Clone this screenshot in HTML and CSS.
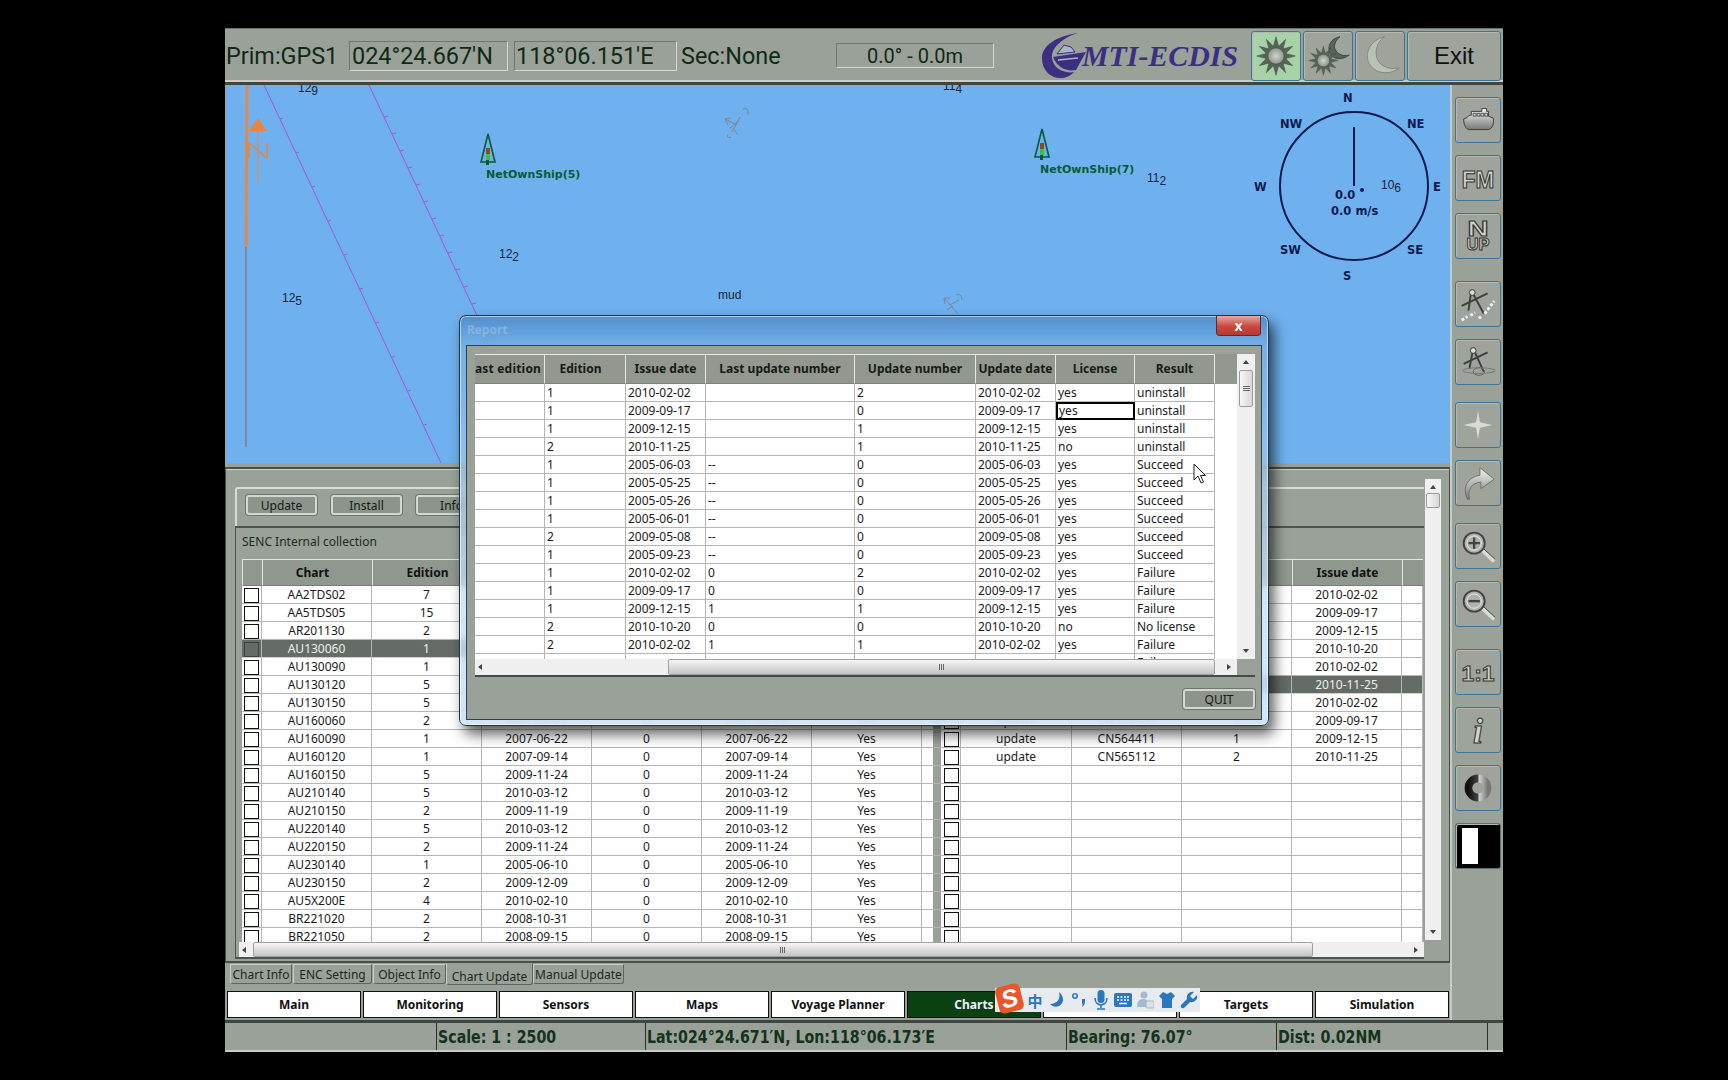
FILE: index.html
```html
<!DOCTYPE html>
<html lang="en">
<head>
<meta charset="utf-8">
<title>MTI-ECDIS</title>
<link rel="stylesheet" href="styles.css">
</head>
<body>
<svg class="defs" width="0" height="0" aria-hidden="true">
  <defs>
    <linearGradient id="silver" x1="0" y1="0" x2="0" y2="1"><stop offset="0" stop-color="#f4f6f2"/><stop offset="1" stop-color="#75797a"/></linearGradient>
    <linearGradient id="ring" x1="0" y1="0" x2="1" y2="0"><stop offset="0" stop-color="#111"/><stop offset=".5" stop-color="#444"/><stop offset=".55" stop-color="#d5d5d5"/><stop offset="1" stop-color="#777"/></linearGradient>
    <radialGradient id="sunc"><stop offset="0" stop-color="#cfd6cd"/><stop offset="1" stop-color="#8b948a"/></radialGradient>
    <symbol id="sun" viewBox="0 0 50 50">
      <polygon points="25,4 27.85,14.37 35.5,6.81 32.78,17.22 43.19,14.5 35.63,22.15 46,25 35.63,27.85 43.19,35.5 32.78,32.78 35.5,43.19 27.85,35.63 25,46 22.15,35.63 14.5,43.19 17.22,32.78 6.81,35.5 14.37,27.85 4,25 14.37,22.15 6.81,14.5 17.22,17.22 14.5,6.81 22.15,14.37" fill="#566455" stroke="#3f4a3f" stroke-width=".5"/>
      <circle cx="25" cy="25" r="9" fill="url(#sunc)" stroke="#4a554a"/>
    </symbol>
    <symbol id="tree" viewBox="0 0 18 34">
      <path d="M9 1 L16 29 L2 29 Z" fill="none" stroke="#0a5a35" stroke-width="1.6"/>
      <rect x="7" y="26" width="3" height="6" fill="#0a5a35"/>
      <rect x="7" y="15" width="4" height="8" fill="#8a4a20"/>
      <rect x="7" y="21" width="4" height="6" fill="#3fbf3f"/>
    </symbol>
  </defs>
</svg>

<div class="app">
  <header class="top">
    <span class="prim">Prim:GPS1</span>
    <span class="field lat">024°24.667′N</span>
    <span class="field lon">118°06.151′E</span>
    <span class="sec">Sec:None</span>
    <span class="field off">0.0° - 0.0m</span>
    <svg class="logo" width="200" height="48" viewBox="0 0 200 48">
      <path d="M36 1 C14 4 0 14 0 26 C0 38 8 46 18 46 C24 46 28 44 32 40 C22 42 11 36 10 26 C9 16 20 6 36 1 Z" fill="#3a2f80"/>
      <path d="M11 25 L44 20 L34 38 C24 40 15 35 11 25 Z" fill="#3a2f80"/>
      <path d="M15 22 L22 13 L29 15 L33 20 Z" fill="#aeb2c8" stroke="#3a2f80"/>
      <path d="M16 28 L36 26" stroke="#aeb2c8" stroke-width="1.5"/>
      <text class="logotext" x="40" y="34" textLength="156" lengthAdjust="spacingAndGlyphs">MTI-ECDIS</text>
    </svg>
    <button class="btn mode on" aria-label="Day"><svg width="46" height="46" viewBox="0 0 50 50"><use href="#sun"/></svg></button>
    <button class="btn mode" aria-label="Dusk">
      <svg width="46" height="46" viewBox="0 0 50 50">
        <path d="M38 4 C28 6 24 14 27 22 C31 29 40 30 48 24 C40 26 33 22 32 15 C32 11 34 7 38 4 Z" fill="#5a635a" stroke="#3c443c"/>
        <use href="#sun" x="1" y="11" width="38" height="38"/>
      </svg>
    </button>
    <button class="btn mode" aria-label="Night">
      <svg width="46" height="46" viewBox="0 0 50 50"><path d="M30 4 C14 8 8 22 13 33 C19 45 36 46 46 38 C32 41 22 34 21 24 C20 15 24 8 30 4 Z" fill="#b9c2b4" stroke="#7d857b"/></svg>
    </button>
    <button class="btn exit">Exit</button>
  </header>

  <div class="middle">
    <div class="leftcol">
      <section class="map">
        <svg class="chart" width="1225" height="378" viewBox="225 85 1225 378">
          <line x1="264" y1="85" x2="441" y2="463" class="route"/>
          <line x1="369" y1="85" x2="546" y2="463" class="route"/>
          <path class="ticks" d="M280 119l3 -1M296 153l3 -1M312 187l3 -1M328 221l3 -1M344 255l3 -1M360 289l3 -1M376 323l3 -1M392 357l3 -1M408 391l3 -1M424 425l3 -1M384 117l4 -1M392 134l4 -1M400 151l4 -1M408 168l4 -1M416 185l4 -1M424 202l4 -1M432 219l4 -1M440 236l4 -1M448 253l4 -1M456 270l4 -1M464 287l4 -1M472 304l4 -1"/>
          <line x1="247" y1="85" x2="246" y2="247" class="orange"/>
          <line x1="246" y1="247" x2="246" y2="447" class="greyline"/>
          <path d="M258 118 L267 131 L249 131 Z" fill="#e8843f"/>
          <line x1="258" y1="131" x2="258" y2="183" stroke="#e8843f"/>
          <path d="M249 158 V143 L267 158 V143" fill="none" stroke="#e8843f" stroke-width="1.5"/>
          <text class="snd" x="298" y="92">12<tspan dy="3">9</tspan></text>
          <text class="snd" x="943" y="90">11<tspan dy="3">4</tspan></text>
          <text class="snd" x="499" y="258">12<tspan dy="3">2</tspan></text>
          <text class="snd" x="282" y="302">12<tspan dy="3">5</tspan></text>
          <text class="snd" x="1147" y="182">11<tspan dy="3">2</tspan></text>
          <text class="snd" x="1381" y="189">10<tspan dy="3">6</tspan></text>
          <text class="snd" x="718" y="299">mud</text>
          <path class="rock" d="M725 119 l12 6 M725 119 l3 6 M725 119 l6 -1 M730 128 l9 -7 M733 128 l5 7 M728 134 q-3 5 3 3 M743 109 q6 -2 5 6 M740 117 l-8 15"/>
          <path class="rock" d="M944 298 l14 16 M944 298 l1 6 M944 298 l6 0 M950 305 l9 -5 M947 310 l6 -4 M956 295 q6 -2 6 5 M941 316 l6 4"/>
          <use href="#tree" x="479" y="133" width="18" height="34"/>
          <text class="own" x="486" y="178">NetOwnShip(5)</text>
          <use href="#tree" x="1033" y="128" width="18" height="34"/>
          <text class="own" x="1040" y="173">NetOwnShip(7)</text>
          <circle cx="1354" cy="186" r="74" class="dial"/>
          <line x1="1354" y1="127" x2="1354" y2="186" class="needle"/>
          <circle cx="1362" cy="190" r="2" fill="#0a1a50"/>
          <text class="cmp" x="1335" y="199">0.0</text>
          <text class="cmp" x="1331" y="215">0.0 m/s</text>
          <text class="cmp" x="1343" y="102">N</text>
          <text class="cmp" x="1407" y="128">NE</text>
          <text class="cmp" x="1433" y="191">E</text>
          <text class="cmp" x="1407" y="254">SE</text>
          <text class="cmp" x="1343" y="280">S</text>
          <text class="cmp" x="1280" y="254">SW</text>
          <text class="cmp" x="1254" y="191">W</text>
          <text class="cmp" x="1280" y="128">NW</text>
        </svg>
      </section>

      <section class="panel">
        <div class="mainpane">
          <div class="group">
            <button class="gbtn">Update</button>
            <button class="gbtn">Install</button>
            <button class="gbtn">Info</button>
          </div>
          <div class="frame">
            <div class="senc">SENC Internal collection</div>
            <div class="tables">
              <div class="clip left">
                <table class="grid">
                  <colgroup><col class="c20"><col class="c110"><col class="c110"><col class="c110"><col class="c110"><col class="c110"><col class="c110"></colgroup>
                  <thead><tr><th></th><th class="shift">Chart</th><th>Edition</th><th></th><th></th><th></th><th></th></tr></thead>
                  <tbody>
                    <tr><td><i class="box"></i></td><td>AA2TDS02</td><td>7</td><td></td><td></td><td></td><td></td></tr>
                    <tr><td><i class="box"></i></td><td>AA5TDS05</td><td>15</td><td></td><td></td><td></td><td></td></tr>
                    <tr><td><i class="box"></i></td><td>AR201130</td><td>2</td><td></td><td></td><td></td><td></td></tr>
                    <tr class="sel"><td><i class="box"></i></td><td>AU130060</td><td>1</td><td></td><td></td><td></td><td></td></tr>
                    <tr><td><i class="box"></i></td><td>AU130090</td><td>1</td><td></td><td></td><td></td><td></td></tr>
                    <tr><td><i class="box"></i></td><td>AU130120</td><td>5</td><td></td><td></td><td></td><td></td></tr>
                    <tr><td><i class="box"></i></td><td>AU130150</td><td>5</td><td></td><td></td><td></td><td></td></tr>
                    <tr><td><i class="box"></i></td><td>AU160060</td><td>2</td><td>2007-06-22</td><td>0</td><td>2007-06-22</td><td>Yes</td></tr>
                    <tr><td><i class="box"></i></td><td>AU160090</td><td>1</td><td>2007-06-22</td><td>0</td><td>2007-06-22</td><td>Yes</td></tr>
                    <tr><td><i class="box"></i></td><td>AU160120</td><td>1</td><td>2007-09-14</td><td>0</td><td>2007-09-14</td><td>Yes</td></tr>
                    <tr><td><i class="box"></i></td><td>AU160150</td><td>5</td><td>2009-11-24</td><td>0</td><td>2009-11-24</td><td>Yes</td></tr>
                    <tr><td><i class="box"></i></td><td>AU210140</td><td>5</td><td>2010-03-12</td><td>0</td><td>2010-03-12</td><td>Yes</td></tr>
                    <tr><td><i class="box"></i></td><td>AU210150</td><td>2</td><td>2009-11-19</td><td>0</td><td>2009-11-19</td><td>Yes</td></tr>
                    <tr><td><i class="box"></i></td><td>AU220140</td><td>5</td><td>2010-03-12</td><td>0</td><td>2010-03-12</td><td>Yes</td></tr>
                    <tr><td><i class="box"></i></td><td>AU220150</td><td>2</td><td>2009-11-24</td><td>0</td><td>2009-11-24</td><td>Yes</td></tr>
                    <tr><td><i class="box"></i></td><td>AU230140</td><td>1</td><td>2005-06-10</td><td>0</td><td>2005-06-10</td><td>Yes</td></tr>
                    <tr><td><i class="box"></i></td><td>AU230150</td><td>2</td><td>2009-12-09</td><td>0</td><td>2009-12-09</td><td>Yes</td></tr>
                    <tr><td><i class="box"></i></td><td>AU5X200E</td><td>4</td><td>2010-02-10</td><td>0</td><td>2010-02-10</td><td>Yes</td></tr>
                    <tr><td><i class="box"></i></td><td>BR221020</td><td>2</td><td>2008-10-31</td><td>0</td><td>2008-10-31</td><td>Yes</td></tr>
                    <tr><td><i class="box"></i></td><td>BR221050</td><td>2</td><td>2008-09-15</td><td>0</td><td>2008-09-15</td><td>Yes</td></tr>
                  </tbody>
                </table>
              </div>
              <div class="clip right">
                <table class="grid wide">
                  <colgroup><col class="c28"><col class="c111"><col class="c110"><col class="c110"><col class="c110"><col class="c21"></colgroup>
                  <thead><tr><th></th><th></th><th></th><th></th><th>Issue date</th><th></th></tr></thead>
                  <tbody>
                    <tr><td class="rh"><i class="box"></i></td><td></td><td></td><td></td><td>2010-02-02</td><td></td></tr>
                    <tr><td class="rh"><i class="box"></i></td><td></td><td></td><td></td><td>2009-09-17</td><td></td></tr>
                    <tr><td class="rh"><i class="box"></i></td><td></td><td></td><td></td><td>2009-12-15</td><td></td></tr>
                    <tr><td class="rh"><i class="box"></i></td><td></td><td></td><td></td><td>2010-10-20</td><td></td></tr>
                    <tr><td class="rh"><i class="box"></i></td><td></td><td></td><td></td><td>2010-02-02</td><td></td></tr>
                    <tr class="sel"><td class="rh"><i class="box"></i></td><td></td><td></td><td></td><td>2010-11-25</td><td></td></tr>
                    <tr><td class="rh"><i class="box"></i></td><td></td><td></td><td></td><td>2010-02-02</td><td></td></tr>
                    <tr><td class="rh"><i class="box"></i></td><td>update</td><td>CN564300</td><td>3</td><td>2009-09-17</td><td></td></tr>
                    <tr><td class="rh"><i class="box"></i></td><td>update</td><td>CN564411</td><td>1</td><td>2009-12-15</td><td></td></tr>
                    <tr><td class="rh"><i class="box"></i></td><td>update</td><td>CN565112</td><td>2</td><td>2010-11-25</td><td></td></tr>
                    <tr><td class="rh"><i class="box"></i></td><td></td><td></td><td></td><td></td><td></td></tr>
                    <tr><td class="rh"><i class="box"></i></td><td></td><td></td><td></td><td></td><td></td></tr>
                    <tr><td class="rh"><i class="box"></i></td><td></td><td></td><td></td><td></td><td></td></tr>
                    <tr><td class="rh"><i class="box"></i></td><td></td><td></td><td></td><td></td><td></td></tr>
                    <tr><td class="rh"><i class="box"></i></td><td></td><td></td><td></td><td></td><td></td></tr>
                    <tr><td class="rh"><i class="box"></i></td><td></td><td></td><td></td><td></td><td></td></tr>
                    <tr><td class="rh"><i class="box"></i></td><td></td><td></td><td></td><td></td><td></td></tr>
                    <tr><td class="rh"><i class="box"></i></td><td></td><td></td><td></td><td></td><td></td></tr>
                    <tr><td class="rh"><i class="box"></i></td><td></td><td></td><td></td><td></td><td></td></tr>
                    <tr><td class="rh"><i class="box"></i></td><td></td><td></td><td></td><td></td><td></td></tr>
                  </tbody>
                </table>
              </div>
            </div>
            <div class="hscroll main-h">
              <i class="arr al"></i>
              <div class="track"><div class="hthumb big"><i class="grip"></i></div></div>
              <i class="arr ar"></i>
            </div>
          </div>
        </div>
        <div class="vscroll main-v">
          <i class="arr au"></i>
          <div class="track"><div class="vthumb small"></div></div>
          <i class="arr ad"></i>
        </div>
      </section>

      <nav class="tabs">
        <span class="tab">Chart Info</span>
        <span class="tab">ENC Setting</span>
        <span class="tab">Object Info</span>
        <span class="tab active">Chart Update</span>
        <span class="tab">Manual Update</span>
      </nav>

      <nav class="menu">
        <a class="mi">Main</a>
        <a class="mi">Monitoring</a>
        <a class="mi">Sensors</a>
        <a class="mi">Maps</a>
        <a class="mi">Voyage Planner</a>
        <a class="mi cur">Charts</a>
        <a class="mi"></a>
        <a class="mi">Targets</a>
        <a class="mi">Simulation</a>
      </nav>
    </div>

    <aside class="tools">
      <button class="btn tool" aria-label="Own ship">
        <svg width="44" height="44" viewBox="0 0 46 46">
          <path d="M8 22 C12 21 13 18 15 18 L16 18 L16 14 L27 14 L27 11 L32 11 L32 14 L34 14 L34 19 L39 21 C40 27 38 32 34 33 L14 33 C10 33 8 27 8 22 Z" fill="url(#silver)" stroke="#3a3d3a"/>
          <path d="M18 16h3v3h-3zM22 16h3v3h-3zM26 16h3v3h-3zM30 16h3v3h-3z" fill="none" stroke="#333" stroke-width=".8"/>
        </svg>
      </button>
      <button class="btn tool"><svg width="44" height="44" viewBox="0 0 46 46"><text class="embos" x="23" y="33" text-anchor="middle" font-size="25" textLength="34" lengthAdjust="spacingAndGlyphs">FM</text></svg></button>
      <button class="btn tool"><svg width="44" height="44" viewBox="0 0 46 46"><text class="embos" x="23" y="23" text-anchor="middle" font-size="24" textLength="22" lengthAdjust="spacingAndGlyphs">N</text><text class="embos" x="23" y="38" text-anchor="middle" font-size="18" textLength="24" lengthAdjust="spacingAndGlyphs">UP</text></svg></button>
      <button class="btn tool gap-a" aria-label="Route measure">
        <svg width="44" height="44" viewBox="0 0 46 46">
          <path d="M16 9 L29 33 M16 9 L13 30 M6 25 L33 12" stroke="#3a3f3a" stroke-width="2" fill="none"/>
          <circle cx="17" cy="11" r="3" fill="#ddd" stroke="#333"/>
          <path d="M6 40 L12 36 M15 35 L20 32 M24 36 L27 39 M30 33 L40 20" stroke="#eef" stroke-width="3" stroke-dasharray="3 2" fill="none"/>
        </svg>
      </button>
      <button class="btn tool" aria-label="Range measure">
        <svg width="44" height="44" viewBox="0 0 46 46">
          <path d="M18 9 L29 33 M18 9 L14 30 M8 25 L33 13" stroke="#3a3f3a" stroke-width="2" fill="none"/>
          <circle cx="18" cy="11" r="3" fill="#ddd" stroke="#333"/>
          <ellipse cx="24" cy="32" rx="17" ry="3" fill="none" stroke="#777"/>
          <ellipse cx="24" cy="33" rx="6" ry="4" fill="none" stroke="#666"/>
        </svg>
      </button>
      <button class="btn tool gap-b" aria-label="Centre">
        <svg width="44" height="44" viewBox="0 0 46 46"><path d="M23 8 L25 20 L38 23 L25 26 L23 38 L21 26 L8 23 L21 20 Z" fill="#d8dcd6"/></svg>
      </button>
      <button class="btn tool" aria-label="Back">
        <svg width="44" height="44" viewBox="0 0 46 46"><path d="M12 40 C6 28 12 17 25 15 L25 7 L40 19 L26 29 L26 22 C16 23 12 30 14 40 Z" fill="url(#silver)" stroke="#6a6f6a"/></svg>
      </button>
      <button class="btn tool gap-b" aria-label="Zoom in">
        <svg width="44" height="44" viewBox="0 0 46 46"><path d="M27 27 L40 39" stroke="#d8dad6" stroke-width="4"/><path d="M27 27 L40 39" stroke="#444" stroke-width="1" transform="translate(1 -2)"/><circle cx="19" cy="20" r="11" fill="#adb3ab" stroke="#444" stroke-width="2"/><circle cx="19" cy="20" r="7.5" fill="none" stroke="#e8ebe6"/><path d="M13 20h12M19 14v12" stroke="#444" stroke-width="2.5"/></svg>
      </button>
      <button class="btn tool" aria-label="Zoom out">
        <svg width="44" height="44" viewBox="0 0 46 46"><path d="M27 27 L40 39" stroke="#d8dad6" stroke-width="4"/><path d="M27 27 L40 39" stroke="#444" stroke-width="1" transform="translate(1 -2)"/><circle cx="19" cy="20" r="11" fill="#adb3ab" stroke="#444" stroke-width="2"/><circle cx="19" cy="20" r="7.5" fill="none" stroke="#e8ebe6"/><path d="M13 20h12" stroke="#444" stroke-width="2.5"/></svg>
      </button>
      <button class="btn tool gap-a"><svg width="44" height="44" viewBox="0 0 46 46"><text class="embos" x="23" y="32" text-anchor="middle" font-size="24">1:1</text></svg></button>
      <button class="btn tool"><svg width="44" height="44" viewBox="0 0 46 46"><text class="embos ital" x="23" y="37" text-anchor="middle" font-size="37">i</text></svg></button>
      <button class="btn tool" aria-label="Brightness">
        <svg width="44" height="44" viewBox="0 0 46 46"><circle cx="23" cy="23" r="10" fill="none" stroke="url(#ring)" stroke-width="8"/></svg>
      </button>
      <button class="btn tool contrast" aria-label="Contrast"><i class="half"></i></button>
    </aside>
  </div>

  <footer class="status">
    <span></span>
    <span><b class="st">Scale: 1 : 2500</b></span>
    <span><b class="st">Lat:024°24.671′N, Lon:118°06.173′E</b></span>
    <span><b class="st">Bearing: 76.07°</b></span>
    <span><b class="st">Dist: 0.02NM</b></span>
    <span></span>
  </footer>
</div>

<div class="dialog">
  <div class="dtitle">Report</div>
  <button class="close">x</button>
  <div class="dbody">
    <div class="dframe">
      <div class="dtop">
        <div class="dwrap">
          <table class="rep">
            <colgroup><col class="d70"><col class="d81"><col class="d80"><col class="d149"><col class="d121"><col class="d80"><col class="d79"><col class="d80"></colgroup>
            <thead><tr><th class="cut">Last edition</th><th class="ed">Edition</th><th>Issue date</th><th>Last update number</th><th>Update number</th><th>Update date</th><th>License</th><th>Result</th></tr></thead>
            <tbody>
              <tr><td></td><td>1</td><td>2010-02-02</td><td></td><td>2</td><td>2010-02-02</td><td>yes</td><td>uninstall</td></tr>
              <tr><td></td><td>1</td><td>2009-09-17</td><td></td><td>0</td><td>2009-09-17</td><td class="focus">yes</td><td>uninstall</td></tr>
              <tr><td></td><td>1</td><td>2009-12-15</td><td></td><td>1</td><td>2009-12-15</td><td>yes</td><td>uninstall</td></tr>
              <tr><td></td><td>2</td><td>2010-11-25</td><td></td><td>1</td><td>2010-11-25</td><td>no</td><td>uninstall</td></tr>
              <tr><td></td><td>1</td><td>2005-06-03</td><td>--</td><td>0</td><td>2005-06-03</td><td>yes</td><td>Succeed</td></tr>
              <tr><td></td><td>1</td><td>2005-05-25</td><td>--</td><td>0</td><td>2005-05-25</td><td>yes</td><td>Succeed</td></tr>
              <tr><td></td><td>1</td><td>2005-05-26</td><td>--</td><td>0</td><td>2005-05-26</td><td>yes</td><td>Succeed</td></tr>
              <tr><td></td><td>1</td><td>2005-06-01</td><td>--</td><td>0</td><td>2005-06-01</td><td>yes</td><td>Succeed</td></tr>
              <tr><td></td><td>2</td><td>2009-05-08</td><td>--</td><td>0</td><td>2009-05-08</td><td>yes</td><td>Succeed</td></tr>
              <tr><td></td><td>1</td><td>2005-09-23</td><td>--</td><td>0</td><td>2005-09-23</td><td>yes</td><td>Succeed</td></tr>
              <tr><td></td><td>1</td><td>2010-02-02</td><td>0</td><td>2</td><td>2010-02-02</td><td>yes</td><td>Failure</td></tr>
              <tr><td></td><td>1</td><td>2009-09-17</td><td>0</td><td>0</td><td>2009-09-17</td><td>yes</td><td>Failure</td></tr>
              <tr><td></td><td>1</td><td>2009-12-15</td><td>1</td><td>1</td><td>2009-12-15</td><td>yes</td><td>Failure</td></tr>
              <tr><td></td><td>2</td><td>2010-10-20</td><td>0</td><td>0</td><td>2010-10-20</td><td>no</td><td>No license</td></tr>
              <tr><td></td><td>2</td><td>2010-02-02</td><td>1</td><td>1</td><td>2010-02-02</td><td>yes</td><td>Failure</td></tr>
              <tr><td></td><td></td><td></td><td></td><td></td><td></td><td></td><td>Failure</td></tr>
            </tbody>
          </table>
        </div>
        <div class="vscroll rep-v">
          <i class="arr au"></i>
          <div class="track"><div class="vthumb tall"><i class="grip"></i></div></div>
          <i class="arr ad"></i>
        </div>
      </div>
      <div class="hscroll rep-h">
        <i class="arr al"></i>
        <div class="track"><div class="hthumb rep-thumb"><i class="grip"></i></div></div>
        <i class="arr ar"></i>
      </div>
    </div>
    <div class="dfoot"><button class="gbtn quit">QUIT</button></div>
  </div>
</div>

<svg class="cursor" width="14" height="22" viewBox="0 0 14 22"><path d="M1 1 L1 17 L5 13 L8 20 L10.5 19 L7.5 12.5 L12.5 12.5 Z" fill="#fff" stroke="#222" stroke-width="1"/></svg>

<div class="sogou">
  <span class="slogo">S</span>
  <span class="sg zh">中</span>
  <svg class="sg" width="18" height="18" viewBox="0 0 18 18"><path d="M11 1 C13 8 9 13 2 13 C5 17 14 17 15 9 C15 6 14 3 11 1 Z"/></svg>
  <svg class="sg" width="18" height="18" viewBox="0 0 18 18"><circle cx="5" cy="5" r="2.2" fill="none" stroke="#2a77c0" stroke-width="1.6"/><path d="M12 8 h3 v3 q0 3 -3 5 q1 -3 0 -4 z"/></svg>
  <svg class="sg" width="18" height="20" viewBox="0 0 18 20"><rect x="5.5" y="0" width="7" height="13" rx="3.5"/><path d="M3 8 c0 9 12 9 12 0 M9 14 v4 M5 19 h8" fill="none" stroke="#2a77c0" stroke-width="1.6"/></svg>
  <svg class="sg" width="18" height="16" viewBox="0 0 18 16"><rect x="0" y="1" width="18" height="14" rx="2"/><path d="M3 5h2M6.5 5h2M10 5h2M13 5h2M3 8h2M6.5 8h2M10 8h2M13 8h2M5 11.5h8" stroke="#fff" stroke-width="1.4"/></svg>
  <svg class="sg dim" width="18" height="18" viewBox="0 0 18 18"><circle cx="8" cy="4" r="3.5"/><path d="M1 16 C1 9 4 8 8 8 C10 8 11 9 11 10 L11 16 Z"/><rect x="10" y="10" width="8" height="7" rx="1" fill="#dfe3e6" stroke="#9fb3c5"/></svg>
  <svg class="sg" width="18" height="18" viewBox="0 0 18 18"><path d="M5 1 L9 3 L13 1 L17 5 L14 8 L14 17 L4 17 L4 8 L1 5 Z"/></svg>
  <svg class="sg" width="18" height="18" viewBox="0 0 18 18"><path d="M17 4 L13 8 L10 5 L14 1 C10 0 6 3 7 8 L1 14 C0 16 2 18 4 17 L10 11 C15 12 18 8 17 4 Z"/></svg>
</div>
</body>
</html>
```
FILE: styles.css
```css
* { box-sizing: border-box; }
html, body { margin: 0; padding: 0; background: #000; height: 100%; overflow: hidden; }
body { font-family: "Noto Sans", sans-serif; font-size: 12px; color: #111; }
button { font: inherit; padding: 0; cursor: default; }
.defs { position: absolute; }

.app { width: 1278px; height: 1023px; margin: 29px 0 0 225px; background: #9aa199; display: flex; flex-direction: column; box-shadow: 0 -1px #6d726c; }

/* top bar */
.top { height: 56px; display: flex; align-items: center; flex: none; padding-left: 1px; border-bottom: 3px solid #3f4540; box-shadow: inset 0 -2px #c9cec6; color: #0f2a14; font-family: Roboto, sans-serif; font-size: 23.4px; }
.prim { width: 123px; }
.field { display: flex; align-items: center; border: 1px solid; border-color: #71776f #d3d7d0 #d3d7d0 #71776f; white-space: nowrap; }
.lat { width: 159px; height: 30px; padding-left: 2px; }
.lon { width: 163px; height: 30px; padding-left: 1px; margin-left: 6px; }
.sec { width: 155px; margin-left: 4px; }
.off { width: 158px; height: 25px; justify-content: center; font-size: 20px; }
.logo { margin-left: 48px; flex: none; }
.logotext { font-family: "Liberation Serif", serif; font-weight: bold; font-style: italic; font-size: 30px; fill: #3a2f80; }
.btn { background: #9ea49c; border: 1px solid #3f7394; border-radius: 3px; display: flex; align-items: center; justify-content: center; color: #111; box-shadow: inset 1px 1px #b4b9b1; }
.mode { width: 50px; height: 50px; margin-left: 2px; }
.mode:first-of-type { margin-left: 9px; }
.mode.on { background: #a8d2a7; }
.exit { width: 94px; height: 50px; margin-left: 2px; font-family: "Liberation Sans", sans-serif; font-size: 24px; }

/* middle */
.middle { flex: none; height: 935px; display: flex; }
.leftcol { width: 1225px; flex: none; display: flex; flex-direction: column; }
.map { height: 378px; flex: none; background: #6fb1ee; margin-left: 1px; overflow: hidden; }
.chart { display: block; margin-left: -1px; }
.route { stroke: #a455d8; stroke-width: 1; }
.ticks { stroke: #a455d8; stroke-width: 1; fill: none; }
.orange { stroke: #e0894f; stroke-width: 3; }
.greyline { stroke: #7c8a98; stroke-width: 2; }
.snd { font-family: "Liberation Sans", sans-serif; font-size: 12px; fill: #10233c; }
.rock { stroke: #76889a; stroke-width: 1; fill: none; }
.own { font-family: "DejaVu Sans", sans-serif; font-size: 11px; font-weight: bold; fill: #0a5a35; }
.dial { fill: none; stroke: #0a1a50; stroke-width: 2; }
.needle { stroke: #0a1a50; stroke-width: 2; }
.cmp { font-family: "DejaVu Sans", sans-serif; font-size: 11.5px; font-weight: bold; fill: #0a1a50; }

/* panel */
.panel { height: 496px; flex: none; margin-top: 4px; border: 1px solid #4a4f4a; border-top: 2px solid #4a4f4a; border-bottom: 2px solid #4a4f4a; box-shadow: inset 0 1px #cdd2cc; padding: 10px 8px 0 9px; display: flex; gap: 1px; }
.mainpane { width: 1189px; flex: none; padding-top: 8px; }
.group { height: 39px; border: 2px solid #d8dcd6; border-right: 0; border-bottom: 0; border-radius: 3px 0 0 0; padding: 6px 0 0 9px; display: flex; gap: 14px; }
.gbtn { width: 71px; height: 20px; background: #8d948c; border: 2px solid #d5d8d2; border-radius: 3px; color: #151a15; box-shadow: 0 0 0 1px #70766f; font-size: 12px; }
.frame { height: 433px; border-top: 2px solid #4d534d; border-left: 1px solid #4d534d; border-bottom: 2px solid #4d534d; padding: 0 0 0 6px; }
.senc { height: 31px; line-height: 28px; color: #1f2a20; }
.tables { height: 383px; display: flex; }
.clip { overflow: hidden; flex: none; height: 383px; background: #fff; }
.left { width: 691px; background: repeating-linear-gradient(#fff 0 17px, #b5b5b5 17px 18px) 0 9px; }
.right { width: 490px; }
.grid { border-collapse: separate; border-spacing: 0; table-layout: fixed; width: 680px; text-align: center; }
.grid.wide { width: 490px; }
.c20 { width: 20px; } .c21 { width: 21px; } .c28 { width: 28px; } .c110 { width: 110px; } .c111 { width: 111px; }
.grid th { height: 27px; padding: 0; background: #90978f; border-top: 1px solid #e4e7e2; border-left: 1px solid #e4e7e2; border-bottom: 1px solid #767c76; font-weight: bold; color: #111; }
.grid th.shift { padding-right: 10px; }
.grid td { height: 18px; padding: 1px 0 0; border-right: 1px solid #b5b5b5; border-bottom: 1px solid #b5b5b5; line-height: 16px; white-space: nowrap; overflow: hidden; color: #1a1a1a; background: #fff; }
.box { display: block; width: 15px; height: 15px; border: 1px solid #111; margin-left: 2px; background: #fff; }
.rh { background: linear-gradient(90deg, #9aa199 8px, #fff 8px) !important; }
.rh .box { margin-left: 11px; }
.sel td { background: #656c66; color: #eef0ee; border-bottom-color: #d0d0d0; }
.sel .box { background: #656c66; border-color: #3c423c; }
.sel .rh { background: linear-gradient(90deg, #9aa199 8px, #656c66 8px) !important; }

/* scrollbars */
.arr { display: block; width: 0; height: 0; flex: none; border: 3px solid transparent; }
.au { border-bottom: 4px solid #444; border-top: 0; margin: 6px auto 4px; }
.ad { border-top: 4px solid #444; border-bottom: 0; margin: 4px auto 6px; }
.al { border-right: 4px solid #444; border-left: 0; margin: auto 6px auto 3px; }
.ar { border-left: 4px solid #444; border-right: 0; margin: auto 6px; }
.vscroll { display: flex; flex-direction: column; background: #f0f0f0; }
.hscroll { display: flex; background: #f0f0f0; }
.vscroll .track { flex: 1; }
.hscroll .track { flex: 1; display: flex; }
.main-v { width: 16px; height: 461px; }
.vthumb { border: 1px solid #9a9a9a; border-radius: 2px; background: linear-gradient(90deg, #f7f7f7, #d8d8d8); margin: 0 1px; display: flex; align-items: center; justify-content: center; }
.small { height: 15px; }
.tall { height: 37px; margin: 2px 2px 0; }
.main-h { height: 15px; margin-left: -3px; width: 1185px; }
.big { width: 1060px; margin-left: 1px; }
.hthumb { height: 100%; border: 1px solid #a0a0a0; border-radius: 2px; background: linear-gradient(#f6f6f6, #c4c4c4); display: flex; align-items: center; justify-content: center; }
.hthumb .grip { width: 6px; height: 6px; background: repeating-linear-gradient(90deg, #666 0 1px, transparent 1px 2px); }
.vthumb .grip { width: 7px; height: 6px; background: repeating-linear-gradient(#666 0 1px, transparent 1px 2px); }

/* tabs */
.tabs { height: 22px; flex: none; display: flex; align-items: flex-start; padding-left: 4px; }
.tab { height: 20px; margin-top: 1px; margin-left: 1px; display: flex; align-items: center; justify-content: center; white-space: nowrap; border: 1px solid #5d635d; border-top-color: #c9cec6; border-left-color: #c9cec6; border-radius: 0 0 3px 3px; color: #1d261e; }
.tab:nth-child(1) { width: 62px; }
.tab:nth-child(2) { width: 79px; }
.tab:nth-child(3) { width: 73px; }
.tab:nth-child(4) { width: 87px; margin-left: 0; height: 22px; margin-top: 0; border-top-color: transparent; padding-top: 4px; }
.tab:nth-child(5) { width: 91px; margin-left: 0; }

/* menu */
.menu { height: 35px; flex: none; padding: 6px 0 2px 2px; display: flex; gap: 2px; }
.mi { width: 134px; height: 27px; background: #fff; border: 1px solid #111; display: flex; align-items: center; justify-content: center; font-weight: bold; color: #111; font-size: 12px; }
.mi.cur { background: #0a4012; color: #eef; }

/* toolbar */
.tools { flex: none; width: 53px; border-left: 2px solid #c6cbc3; padding: 12px 0 0 3px; display: flex; flex-direction: column; gap: 12px; }
.tool { width: 46px; height: 46px; flex: none; }
.gap-a { margin-top: 10px; }
.gap-b { margin-top: 5px; }
.embos { font-family: "Liberation Sans", sans-serif; font-weight: bold; fill: #cfd4cc; stroke: #333; stroke-width: 1.1; }
.ital { font-family: "Liberation Serif", serif; font-style: italic; }
.contrast { background: #000; padding: 4px 5px; justify-content: flex-start; border-color: #5d6f78; }
.half { display: block; width: 16px; height: 36px; background: #fff; margin-left: 1px; }

/* status bar */
.status { flex: none; height: 32px; display: grid; grid-template-columns: 212px 209px 421px 210px 211px 15px; border-top: 3px solid #3f4540; border-bottom: 2px solid #c6cbc3; color: #13331a; font-family: "DejaVu Sans", sans-serif; font-size: 14.2px; }
.status span { display: flex; align-items: center; padding-left: 1px; border-right: 1px solid #2a2f2a; white-space: nowrap; }
.status span:last-child { border-right: 0; }
.st { display: block; font-weight: bold; transform: scaleY(1.2); }

/* report dialog */
.dialog { position: absolute; left: 459px; top: 315px; width: 810px; height: 411px; padding: 29px 6px 6px; border: 1px solid #1c3550; border-radius: 7px; background: linear-gradient(rgba(70,130,195,.72) 0, rgba(120,175,225,.65) 30px, rgba(190,220,245,.7) 240px, rgba(205,228,248,.92) 100%); backdrop-filter: blur(5px); box-shadow: 5px 8px 14px rgba(0,0,0,.65), inset 0 0 0 1px rgba(255,255,255,.55); }
.dtitle { position: absolute; left: 7px; top: 5px; color: rgba(255,255,255,.22); font-size: 12px; font-weight: bold; }
.close { position: absolute; right: 7px; top: 0; width: 45px; height: 20px; border: 1px solid #5a2b2b; border-top: 0; border-radius: 0 0 4px 4px; background: linear-gradient(#e8a9a0, #c9473c 55%, #b73a30); color: #fff; font-weight: bold; font-size: 14px; line-height: 14px; }
.dbody { height: 375px; background: #9aa199; border: 1px solid #30404c; padding: 8px 6px 0 8px; }
.dframe { height: 323px; border-bottom: 2px solid #454c46; }
.dtop { height: 305px; display: flex; }
.dwrap { width: 762px; flex: none; height: 305px; overflow: hidden; background: linear-gradient(#92988f 30px, #fff 30px); }
.rep { width: 740px; table-layout: fixed; border-collapse: separate; border-spacing: 0; }
.d70 { width: 70px; } .d81 { width: 81px; } .d80 { width: 80px; } .d149 { width: 149px; } .d121 { width: 121px; } .d79 { width: 79px; }
.rep th { height: 30px; padding: 0 0 2px; background: #92988f; border-top: 1px solid #e4e7e2; border-right: 1px solid #e4e7e2; border-bottom: 1px solid #7c827c; font-weight: bold; color: #161a16; white-space: nowrap; overflow: hidden; }
.rep th.cut { text-align: left; text-indent: -7px; letter-spacing: .2px; }
.rep th.ed { padding-right: 9px; }
.rep td { height: 18px; padding: 0 0 0 2px; border-right: 1px solid #b5b5b5; border-bottom: 1px solid #b5b5b5; line-height: 17px; white-space: nowrap; overflow: hidden; color: #1a1a1a; }
.rep td.focus { border: 2px solid #000; line-height: 14px; padding-left: 1px; }
.rep-v { width: 18px; height: 305px; }
.rep-h { height: 16px; width: 762px; }
.rep-thumb { width: 547px; margin-left: 180px; }
.dfoot { display: flex; justify-content: flex-end; padding-top: 12px; }
.quit { width: 72px; }

/* overlays */
.cursor { position: absolute; left: 1193px; top: 463px; }
.sogou { position: absolute; left: 995px; top: 988px; width: 205px; height: 24px; background: #e8ebee; display: flex; align-items: center; gap: 4px; padding-left: 31px; }
.slogo { position: absolute; left: 2px; top: -3px; width: 25px; height: 27px; background: #e8572a; border-radius: 5px; transform: rotate(-14deg); color: #fff; font: italic bold 25px/27px "Liberation Sans", sans-serif; text-align: center; }
.sg { fill: #2a77c0; flex: none; }
.sg.dim { fill: #a4bad0; }
.zh { font-family: "Noto Sans CJK SC", sans-serif; font-weight: bold; font-size: 15px; color: #2a77c0; width: 18px; text-align: center; }
```
